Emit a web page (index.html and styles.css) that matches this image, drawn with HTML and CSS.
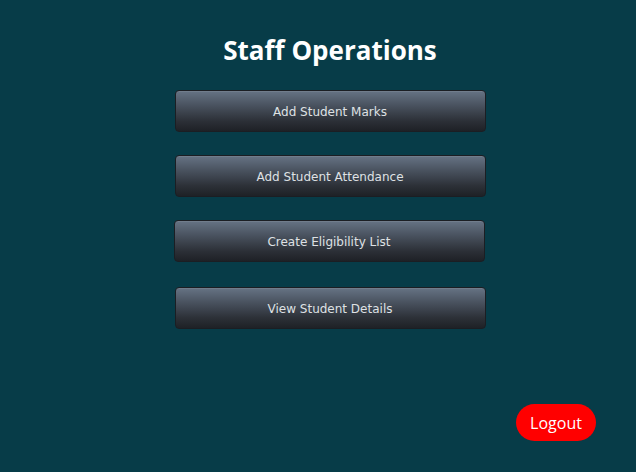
FILE: index.html
```html
<!DOCTYPE html>
<html>
<head>
<meta charset="utf-8">
<link rel="stylesheet" href="styles.css">
</head>
<body>
<div class="page">
  <main class="panel">
    <h1 class="title">Staff Operations</h1>
    <div class="actions">
      <button class="op">Add Student Marks</button>
      <button class="op">Add Student Attendance</button>
      <button class="op shift">Create Eligibility List</button>
      <button class="op gap4">View Student Details</button>
    </div>
  </main>
  <footer class="foot">
    <button class="logout">Logout</button>
  </footer>
</div>
</body>
</html>
```

FILE: styles.css
```css
html, body {
  margin: 0;
  padding: 0;
  background: #073c48;
  height: 100%;
}
.page {
  width: 636px;
  height: 472px;
  display: flex;
  flex-direction: column;
  box-sizing: border-box;
}
.panel {
  display: flex;
  flex-direction: column;
  align-items: center;
  padding-left: 24px;
  padding-top: 31px;
}
.title {
  margin: 0;
  font-family: "Open Sans", sans-serif;
  font-weight: 700;
  font-size: 26px;
  line-height: 38px;
  color: #ffffff;
}
.actions {
  margin-top: 21px;
  display: flex;
  flex-direction: column;
  gap: 23px;
}
.op {
  width: 311px;
  height: 42px;
  box-sizing: border-box;
  border: 1px solid #1b1e23;
  border-radius: 4px;
  background: linear-gradient(to bottom, #667384 0%, #4a5360 35%, #2c3037 75%, #1e2126 100%);
  box-shadow: inset 0 1px 0 rgba(255,255,255,0.08);
  color: #dfe1e4;
  font-family: "DejaVu Sans", sans-serif;
  font-size: 12px;
  padding: 2px 0 0;
}
.shift { margin-left: -1px; }
.gap4 { margin-top: 2px; }
.foot {
  margin-top: auto;
  display: flex;
  justify-content: flex-end;
  padding: 0 40px 31px 0;
}
.logout {
  width: 80px;
  height: 37px;
  border: none;
  border-radius: 19px;
  background: #ff0000;
  color: #ffffff;
  font-family: "Open Sans", sans-serif;
  font-size: 16px;
  padding: 0;
}
```
